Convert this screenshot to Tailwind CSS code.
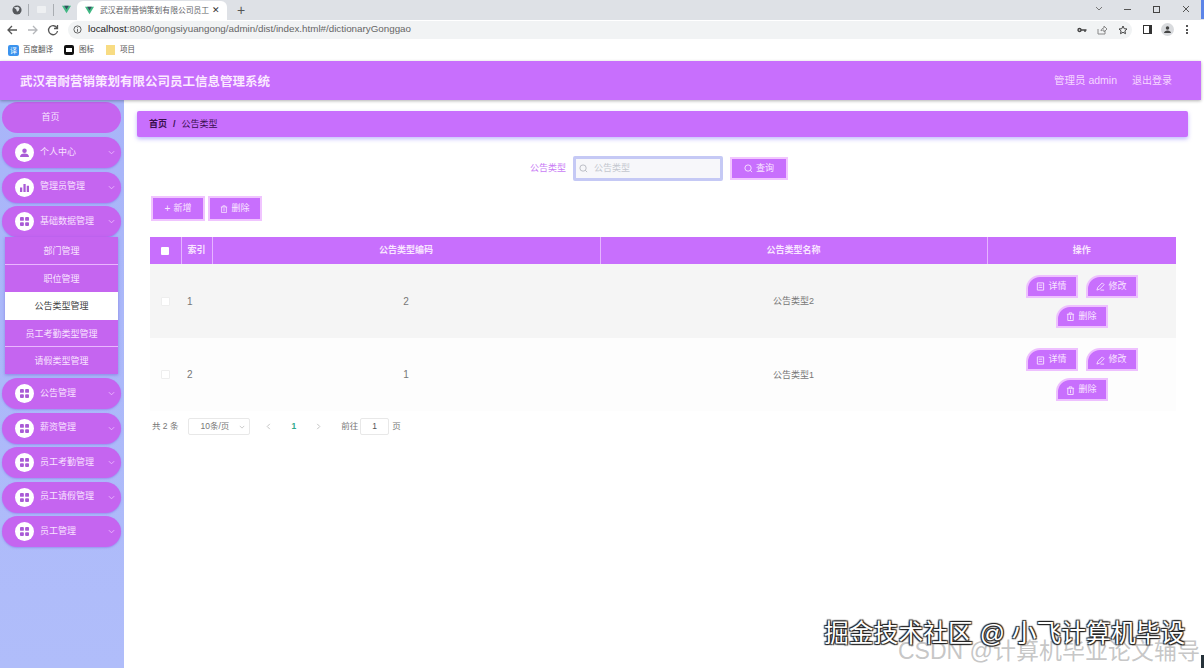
<!DOCTYPE html>
<html lang="zh-CN">
<head>
<meta charset="UTF-8">
<title>武汉君耐营销策划有限公司员工信息管理系统</title>
<script src="https://cdn.jsdelivr.net/npm/@tailwindcss/browser@4"></script>
</head>
<body class="w-[1204px] h-[668px] overflow-hidden bg-white relative font-['Liberation_Sans','Noto_Sans_CJK_SC',sans-serif]">

<!-- browser chrome -->
<div class="h-[20px] bg-[#dee1e6] flex items-end text-[#45494e]">
  <svg class="w-[10px] h-[10px] ml-[12px] mb-[5px]" viewBox="0 0 12 12"><circle cx="6" cy="6" r="5.500" fill="#55585c"/><path d="M2 3l3 2 1 3 2-1 1-3-2-2" fill="#dee1e6"/></svg>
  <div class="w-px h-[12px] bg-[#a9adb2] ml-[6px] mb-[4px]"></div>
  <div class="w-[9px] h-[7px] bg-[#eef0f2] rounded-[1px] ml-[8px] mb-[7px]"></div>
  <div class="w-px h-[12px] bg-[#a9adb2] ml-[7px] mb-[4px]"></div>
  <svg class="w-[9px] h-[9px] ml-[8px] mb-[6px]" viewBox="0 0 12 10"><path d="M0 0h12L6 10z" fill="#41b883"/><path d="M3 0h6L6 5z" fill="#35495e"/></svg>
  <div class="w-[150px] h-[19px] bg-white rounded-t-[6px] ml-[6px] flex items-center pl-[8px]">
    <svg class="w-[9px] h-[9px] shrink-0" viewBox="0 0 12 10"><path d="M0 0h12L6 10z" fill="#41b883"/><path d="M3 0h6L6 5z" fill="#35495e"/></svg>
    <span class="text-[7.800px] ml-[6px] w-[111px] whitespace-nowrap text-[#5f6368]">武汉君耐营销策划有限公司员工</span>
    <span class="text-[9px] ml-[1px] text-[#333]">✕</span>
  </div>
  <span class="text-[14px] leading-[19px] ml-[10px] text-[#555]">+</span>
  <div class="ml-auto flex items-center mb-[7px] text-[#666]">
    <svg class="w-[8px] h-[6px] mr-[21px]" viewBox="0 0 8 6" fill="none" stroke="#777" stroke-width="1"><path d="M1 1l3 3 3-3"/></svg>
    <div class="w-[7px] h-px bg-[#555] mr-[22px]"></div>
    <div class="w-[7px] h-[7px] border border-[#444] mr-[22px]"></div>
    <svg class="w-[8px] h-[8px] mr-[14px]" viewBox="0 0 8 8" stroke="#555" stroke-width="1"><path d="M1 1l6 6M7 1l-6 6"/></svg>
  </div>
</div>
<div class="h-[19px] bg-white flex items-center">
  <svg class="w-[12px] h-[12px] ml-[6px]" viewBox="0 0 12 12" fill="none" stroke="#555" stroke-width="1.300"><path d="M11 6H2M6 2L2 6l4 4"/></svg>
  <svg class="w-[12px] h-[12px] ml-[9px]" viewBox="0 0 12 12" fill="none" stroke="#b5b7ba" stroke-width="1.300"><path d="M1 6h9M6 2l4 4-4 4"/></svg>
  <svg class="w-[12px] h-[12px] ml-[8px]" viewBox="0 0 12 12" fill="none" stroke="#555" stroke-width="1.300"><path d="M10 4a4.500 4.500 0 1 0 .5 3M10.500 1v3.500H7"/></svg>
  <div class="ml-[9px] w-[1064px] h-[18px] bg-[#f1f3f4] rounded-full flex items-center pl-[5px] relative">
    <svg class="w-[9px] h-[9px]" viewBox="0 0 10 10" fill="none" stroke="#555"><circle cx="5" cy="5" r="4"/><path d="M5 4.500v3M5 2.500v1"/></svg>
    <span class="text-[9.800px] ml-[6px] text-[#666] whitespace-nowrap"><span class="text-[#222]">localhost</span>:8080/gongsiyuangong/admin/dist/index.html#/dictionaryGonggao</span>
    <svg class="absolute left-[1009px] top-[5px] w-[10px] h-[8px]" viewBox="0 0 10 8" fill="none" stroke="#444" stroke-width="1.400"><circle cx="2.500" cy="4" r="1.500"/><path d="M4 4h5.500M8 4v2"/></svg>
    <svg class="absolute left-[1029px] top-[4px] w-[10px] h-[10px]" viewBox="0 0 10 10" fill="none" stroke="#888"><path d="M1 4v5h7V6M4 6c0-2 2-3 3-3V1l3 3-3 3V5C6 5 5 5 4 6z"/></svg>
    <svg class="absolute left-[1050px] top-[4px] w-[10px] h-[10px]" viewBox="0 0 10 10" fill="none" stroke="#444"><path d="M5 1l1.200 2.700 2.800.3-2.100 1.900.6 2.800L5 7.300 2.500 8.700l.6-2.800L1 4l2.800-.3z"/></svg>
  </div>
  <div class="w-[9px] h-[9px] border border-[#333] border-r-[3px] ml-[11px]"></div>
  <div class="w-[13px] h-[13px] rounded-full bg-[#d9dbde] ml-[9px] flex items-center justify-center">
    <svg class="w-[7px] h-[7px]" viewBox="0 0 8 8" fill="#444"><circle cx="4" cy="2.200" r="2"/><path d="M0 8c0-2 2-3 4-3s4 1 4 3z"/></svg>
  </div>
  <div class="ml-[12px] flex flex-col gap-[1.500px]"><i class="block w-[2px] h-[2px] bg-[#555]"></i><i class="block w-[2px] h-[2px] bg-[#555]"></i><i class="block w-[2px] h-[2px] bg-[#555]"></i></div>
</div>
<div class="h-[22px] bg-white flex items-center text-[7.500px] text-[#555]">
  <div class="w-[11px] h-[11px] ml-[8px] rounded-[2px] bg-[#3b93ee] text-white text-[7px] leading-[11px] text-center">译</div>
  <span class="ml-[4px]">百度翻译</span>
  <div class="w-[10px] h-[10px] ml-[11px] rounded-[2px] bg-[#111] flex items-center justify-center"><i class="block w-[6px] h-[4px] bg-white"></i></div>
  <span class="ml-[5px]">图标</span>
  <div class="w-[9px] h-[10px] ml-[12px] bg-[#f8dc83]"></div>
  <span class="ml-[5px]">项目</span>
</div>

<!-- header -->
<div class="h-[39px] bg-[#c86ffd] flex items-center shadow-[0_1px_3px_rgba(0,0,0,0.3)] relative z-10 w-[1201px]">
  <div class="ml-[20px] pt-[3px] text-[12.500px] font-bold text-[#fbeaff]">武汉君耐营销策划有限公司员工信息管理系统</div>
  <div class="ml-auto mr-[29px] flex gap-[15px] text-[10px] text-[#f6d8ff]"><span class="text-[10.500px]">管理员 admin</span><span>退出登录</span></div>
</div>

<div class="flex h-[568px]">
  <!-- sidebar -->
  <aside class="w-[124px] shrink-0 bg-gradient-to-b from-[#a8b5f9] to-[#b0bdfa] pt-[2px] text-[9px] text-[#f8e2ff]">
    <div class="h-[31px] ml-[2px] mr-[3px] rounded-full bg-[#c565f0] flex items-center justify-center pr-[22px] pt-[1px]">首页</div>
    <div class="mt-[4px] h-[31px] ml-[2px] mr-[3px] rounded-full bg-[#c565f0] flex items-center shadow-[0_1px_2px_rgba(120,90,230,0.4)]">
      <div class="w-[19px] h-[19px] rounded-full bg-white ml-[13px] flex items-center justify-center"><svg class="w-[9px] h-[9px]" viewBox="0 0 10 10" fill="#a95bd6"><circle cx="5" cy="3" r="2.500"/><path d="M0 10c0-3 2-4 5-4s5 1 5 4z"/></svg></div>
      <span class="ml-[6px]">个人中心</span>
      <svg class="ml-auto mr-[6px] w-[7px] h-[5px]" viewBox="0 0 8 5" fill="none" stroke="#eebcff"><path d="M1 1l3 3 3-3"/></svg>
    </div>
    <div class="mt-[3.500px] h-[31px] ml-[2px] mr-[3px] rounded-full bg-[#c565f0] flex items-center shadow-[0_1px_2px_rgba(120,90,230,0.4)]">
      <div class="w-[19px] h-[19px] rounded-full bg-white ml-[13px] flex items-center justify-center"><svg class="w-[9px] h-[9px]" viewBox="0 0 10 10" fill="#a95bd6"><path d="M0 5h2.500v5H0zM3.800 1h2.500v9H3.800zM7.500 3H10v7H7.500z"/></svg></div>
      <span class="ml-[6px]">管理员管理</span>
      <svg class="ml-auto mr-[6px] w-[7px] h-[5px]" viewBox="0 0 8 5" fill="none" stroke="#eebcff"><path d="M1 1l3 3 3-3"/></svg>
    </div>
    <div class="mt-[3.500px] h-[31px] ml-[2px] mr-[3px] rounded-full bg-[#c565f0] flex items-center shadow-[0_1px_2px_rgba(120,90,230,0.4)]">
      <div class="w-[19px] h-[19px] rounded-full bg-white ml-[13px] flex items-center justify-center"><svg class="w-[9px] h-[9px]" viewBox="0 0 10 10" fill="#a95bd6"><rect width="4.300" height="4.300" rx="1"/><rect x="5.700" width="4.300" height="4.300" rx="1"/><rect y="5.700" width="4.300" height="4.300" rx="1"/><rect x="5.700" y="5.700" width="4.300" height="4.300" rx="1"/></svg></div>
      <span class="ml-[6px]">基础数据管理</span>
      <svg class="ml-auto mr-[6px] w-[7px] h-[5px]" viewBox="0 0 8 5" fill="none" stroke="#eebcff"><path d="M1 1l3 3 3-3"/></svg>
    </div>
    <div class="ml-[5px] w-[113px] bg-[#c565f0] text-center shadow-[0_1px_3px_rgba(90,60,200,0.4)]">
      <div class="h-[27.500px] leading-[28px] border-b border-[#eab6ff]">部门管理</div>
      <div class="h-[27.500px] leading-[28px]">职位管理</div>
      <div class="h-[27.500px] leading-[28px] bg-white text-[#444]">公告类型管理</div>
      <div class="h-[27.500px] leading-[28px] border-b border-[#eab6ff]">员工考勤类型管理</div>
      <div class="h-[27px] leading-[28px]">请假类型管理</div>
    </div>
    <div class="mt-[4px] h-[31px] ml-[2px] mr-[3px] rounded-full bg-[#c565f0] flex items-center shadow-[0_1px_2px_rgba(120,90,230,0.4)]">
      <div class="w-[19px] h-[19px] rounded-full bg-white ml-[13px] flex items-center justify-center"><svg class="w-[9px] h-[9px]" viewBox="0 0 10 10" fill="#a95bd6"><rect width="4.300" height="4.300" rx="1"/><rect x="5.700" width="4.300" height="4.300" rx="1"/><rect y="5.700" width="4.300" height="4.300" rx="1"/><rect x="5.700" y="5.700" width="4.300" height="4.300" rx="1"/></svg></div>
      <span class="ml-[6px]">公告管理</span>
      <svg class="ml-auto mr-[6px] w-[7px] h-[5px]" viewBox="0 0 8 5" fill="none" stroke="#eebcff"><path d="M1 1l3 3 3-3"/></svg>
    </div>
    <div class="mt-[3.500px] h-[31px] ml-[2px] mr-[3px] rounded-full bg-[#c565f0] flex items-center shadow-[0_1px_2px_rgba(120,90,230,0.4)]">
      <div class="w-[19px] h-[19px] rounded-full bg-white ml-[13px] flex items-center justify-center"><svg class="w-[9px] h-[9px]" viewBox="0 0 10 10" fill="#a95bd6"><rect width="4.300" height="4.300" rx="1"/><rect x="5.700" width="4.300" height="4.300" rx="1"/><rect y="5.700" width="4.300" height="4.300" rx="1"/><rect x="5.700" y="5.700" width="4.300" height="4.300" rx="1"/></svg></div>
      <span class="ml-[6px]">薪资管理</span>
      <svg class="ml-auto mr-[6px] w-[7px] h-[5px]" viewBox="0 0 8 5" fill="none" stroke="#eebcff"><path d="M1 1l3 3 3-3"/></svg>
    </div>
    <div class="mt-[3.500px] h-[31px] ml-[2px] mr-[3px] rounded-full bg-[#c565f0] flex items-center shadow-[0_1px_2px_rgba(120,90,230,0.4)]">
      <div class="w-[19px] h-[19px] rounded-full bg-white ml-[13px] flex items-center justify-center"><svg class="w-[9px] h-[9px]" viewBox="0 0 10 10" fill="#a95bd6"><rect width="4.300" height="4.300" rx="1"/><rect x="5.700" width="4.300" height="4.300" rx="1"/><rect y="5.700" width="4.300" height="4.300" rx="1"/><rect x="5.700" y="5.700" width="4.300" height="4.300" rx="1"/></svg></div>
      <span class="ml-[6px]">员工考勤管理</span>
      <svg class="ml-auto mr-[6px] w-[7px] h-[5px]" viewBox="0 0 8 5" fill="none" stroke="#eebcff"><path d="M1 1l3 3 3-3"/></svg>
    </div>
    <div class="mt-[3.500px] h-[31px] ml-[2px] mr-[3px] rounded-full bg-[#c565f0] flex items-center shadow-[0_1px_2px_rgba(120,90,230,0.4)]">
      <div class="w-[19px] h-[19px] rounded-full bg-white ml-[13px] flex items-center justify-center"><svg class="w-[9px] h-[9px]" viewBox="0 0 10 10" fill="#a95bd6"><rect width="4.300" height="4.300" rx="1"/><rect x="5.700" width="4.300" height="4.300" rx="1"/><rect y="5.700" width="4.300" height="4.300" rx="1"/><rect x="5.700" y="5.700" width="4.300" height="4.300" rx="1"/></svg></div>
      <span class="ml-[6px]">员工请假管理</span>
      <svg class="ml-auto mr-[6px] w-[7px] h-[5px]" viewBox="0 0 8 5" fill="none" stroke="#eebcff"><path d="M1 1l3 3 3-3"/></svg>
    </div>
    <div class="mt-[3.500px] h-[31px] ml-[2px] mr-[3px] rounded-full bg-[#c565f0] flex items-center shadow-[0_1px_2px_rgba(120,90,230,0.4)]">
      <div class="w-[19px] h-[19px] rounded-full bg-white ml-[13px] flex items-center justify-center"><svg class="w-[9px] h-[9px]" viewBox="0 0 10 10" fill="#a95bd6"><rect width="4.300" height="4.300" rx="1"/><rect x="5.700" width="4.300" height="4.300" rx="1"/><rect y="5.700" width="4.300" height="4.300" rx="1"/><rect x="5.700" y="5.700" width="4.300" height="4.300" rx="1"/></svg></div>
      <span class="ml-[6px]">员工管理</span>
      <svg class="ml-auto mr-[6px] w-[7px] h-[5px]" viewBox="0 0 8 5" fill="none" stroke="#eebcff"><path d="M1 1l3 3 3-3"/></svg>
    </div>
  </aside>

  <!-- main -->
  <main class="flex-1 pl-[13px] pt-[11px]">
    <div class="w-[1051px] h-[26px] bg-[#c86ffd] rounded-[2px] flex items-center pl-[12px] pt-[2px] text-[9px] text-[#3a1050] shadow-[0_2px_4px_rgba(150,140,250,0.6)]">
      <span class="font-bold">首页</span><span class="mx-[6px] font-bold">/</span><span>公告类型</span>
    </div>

    <!-- search -->
    <div class="flex items-center mt-[19px] ml-[393px] h-[25px]">
      <span class="text-[9px] text-[#c97bf5]">公告类型</span>
      <div class="ml-[7px] w-[150px] h-[25px] border-[3px] border-[#c5c9f5] rounded-[2px] bg-[#f7f7fa] flex items-center pl-[3px] text-[9px] text-[#c4c7cf]">
        <svg class="w-[9px] h-[9px]" viewBox="0 0 10 10" fill="none" stroke="#b5b8c0"><circle cx="4.500" cy="4.500" r="3.500"/><path d="M7 7l2 2"/></svg>
        <span class="ml-[6px]">公告类型</span>
      </div>
      <div class="ml-[7px] w-[58px] h-[23px] border-2 border-[#f2c6ff] bg-[#c86ffd] flex items-center justify-center text-[9px] text-[#f9e6ff]">
        <svg class="w-[9px] h-[9px] mr-[3px]" viewBox="0 0 10 10" fill="none" stroke="#f9e6ff"><circle cx="4.500" cy="4.500" r="3.500"/><path d="M7 7l2 2"/></svg>查询
      </div>
    </div>

    <!-- buttons -->
    <div class="flex gap-[3px] mt-[15px] ml-[14px]">
      <div class="w-[54px] h-[25px] border-2 border-[#f0c4ff] bg-[#c86ffd] flex items-center justify-center text-[9px] text-[#f9e6ff]"><span class="mr-[3px] text-[10px]">+</span>新增</div>
      <div class="w-[54px] h-[25px] border-2 border-[#f0c4ff] bg-[#c86ffd] flex items-center justify-center text-[9px] text-[#f9e6ff]">
        <svg class="w-[8px] h-[8px] mr-[3px]" viewBox="0 0 10 10" fill="none" stroke="#f9e6ff"><path d="M1 2.500h8M3.500 2.500V1h3v1.500M2 2.500V9.500h6V2.500M5 4v4"/></svg>删除
      </div>
    </div>

    <!-- table -->
    <table class="mt-[16px] ml-[13px] w-[1026px] table-fixed border-collapse text-[9px]">
      <thead>
        <tr class="h-[27px] bg-[#c86ffd] text-[#f9e6ff]">
          <th class="w-[31px] border-r border-[#e6b4ff] font-bold"><div class="mx-auto w-[8px] h-[8px] bg-white rounded-[1px]"></div></th>
          <th class="w-[31px] border-r border-[#e6b4ff] font-bold">索引</th>
          <th class="w-[388px] border-r border-[#e6b4ff] font-bold">公告类型编码</th>
          <th class="w-[387px] border-r border-[#e6b4ff] font-bold">公告类型名称</th>
          <th class="font-bold">操作</th>
        </tr>
      </thead>
      <tbody class="text-[#777]">
        <tr class="h-[74px] bg-[#f5f5f5]">
          <td><div class="mx-auto w-[9px] h-[9px] bg-white border border-[#eeeeee] rounded-[1px]"></div></td>
          <td class="pl-[6px] text-[10px]">1</td>
          <td class="text-center text-[10px]">2</td>
          <td class="text-center pt-[2px]">公告类型2</td>
          <td>
            <div class="flex flex-wrap justify-center gap-x-[8px] gap-y-[7px] px-[30px] text-[#f9e6ff]">
              <div class="w-[52px] h-[23px] border-2 border-[#eec0ff] bg-[#c86ffd] rounded-tl-[14px] flex items-center justify-center pt-[1px]">
                <svg class="w-[9px] h-[9px] mr-[3px]" viewBox="0 0 10 10" fill="none" stroke="#f9e6ff"><path d="M1.500 1h7v8h-7zM3 3.500h4M3 6h4"/></svg>详情</div>
              <div class="w-[52px] h-[23px] border-2 border-[#eec0ff] bg-[#c86ffd] rounded-tl-[14px] flex items-center justify-center pt-[1px]">
                <svg class="w-[9px] h-[9px] mr-[3px]" viewBox="0 0 10 10" fill="none" stroke="#f9e6ff"><path d="M1 9l1-3 5-5 2 2-5 5zM5 9h4"/></svg>修改</div>
              <div class="w-[52px] h-[23px] border-2 border-[#eec0ff] bg-[#c86ffd] rounded-tl-[14px] flex items-center justify-center pt-[1px]">
                <svg class="w-[9px] h-[9px] mr-[3px]" viewBox="0 0 10 10" fill="none" stroke="#f9e6ff"><path d="M1 2.500h8M3.500 2.500V1h3v1.500M2 2.500V9.500h6V2.500M5 4v4"/></svg>删除</div>
            </div>
          </td>
        </tr>
        <tr class="h-[73px] bg-[#fdfdfd]">
          <td><div class="mx-auto w-[9px] h-[9px] bg-white border border-[#eeeeee] rounded-[1px]"></div></td>
          <td class="pl-[6px] text-[10px]">2</td>
          <td class="text-center text-[10px]">1</td>
          <td class="text-center pt-[2px]">公告类型1</td>
          <td>
            <div class="flex flex-wrap justify-center gap-x-[8px] gap-y-[7px] px-[30px] text-[#f9e6ff]">
              <div class="w-[52px] h-[23px] border-2 border-[#eec0ff] bg-[#c86ffd] rounded-tl-[14px] flex items-center justify-center pt-[1px]">
                <svg class="w-[9px] h-[9px] mr-[3px]" viewBox="0 0 10 10" fill="none" stroke="#f9e6ff"><path d="M1.500 1h7v8h-7zM3 3.500h4M3 6h4"/></svg>详情</div>
              <div class="w-[52px] h-[23px] border-2 border-[#eec0ff] bg-[#c86ffd] rounded-tl-[14px] flex items-center justify-center pt-[1px]">
                <svg class="w-[9px] h-[9px] mr-[3px]" viewBox="0 0 10 10" fill="none" stroke="#f9e6ff"><path d="M1 9l1-3 5-5 2 2-5 5zM5 9h4"/></svg>修改</div>
              <div class="w-[52px] h-[23px] border-2 border-[#eec0ff] bg-[#c86ffd] rounded-tl-[14px] flex items-center justify-center pt-[1px]">
                <svg class="w-[9px] h-[9px] mr-[3px]" viewBox="0 0 10 10" fill="none" stroke="#f9e6ff"><path d="M1 2.500h8M3.500 2.500V1h3v1.500M2 2.500V9.500h6V2.500M5 4v4"/></svg>删除</div>
            </div>
          </td>
        </tr>
      </tbody>
    </table>

    <!-- pagination -->
    <div class="flex items-center mt-[7px] ml-[15px] text-[8.500px] text-[#777] h-[17px]">
      <span>共 2 条</span>
      <div class="ml-[10px] w-[62px] h-[17px] border border-[#e8e8e8] rounded-[2px] flex items-center pl-[11px]">10条/页<svg class="ml-auto mr-[4px] w-[6px] h-[4px]" viewBox="0 0 8 5" fill="none" stroke="#bbb"><path d="M1 1l3 3 3-3"/></svg></div>
      <svg class="ml-[16px] w-[5px] h-[7px]" viewBox="0 0 5 8" fill="none" stroke="#bbb"><path d="M4 1L1 4l3 3"/></svg>
      <span class="ml-[20px] font-bold text-[#2fa98c]">1</span>
      <svg class="ml-[20px] w-[5px] h-[7px]" viewBox="0 0 5 8" fill="none" stroke="#bbb"><path d="M1 1l3 3-3 3"/></svg>
      <span class="ml-[20px]">前往</span>
      <div class="ml-[2px] w-[29px] h-[17px] border border-[#e8e8e8] rounded-[2px] text-center leading-[15px] text-[#555]">1</div>
      <span class="ml-[3px]">页</span>
    </div>
  </main>
</div>

<!-- edge of the desktop behind the window -->
<div class="absolute right-0 top-0 w-[3px] h-[19px] bg-[#5b84e8]"></div>
<div class="absolute right-0 top-[655px] w-[3px] h-[13px] bg-[#26323a]"></div>

<!-- image watermarks -->
<div class="absolute left-[898px] top-[637px] text-[23px] leading-[28px] text-[#b8b8b8]/80 whitespace-nowrap">CSDN @计算机毕业论文辅导</div>
<div class="absolute left-[824px] top-[619px] text-[24.800px] leading-[30px] text-white whitespace-nowrap [text-shadow:1px_1px_1px_#222,-1px_-1px_1px_#222,1px_-1px_1px_#222,-1px_1px_1px_#222]">掘金技术社区 @ 小飞计算机毕设</div>
</body>
</html>
